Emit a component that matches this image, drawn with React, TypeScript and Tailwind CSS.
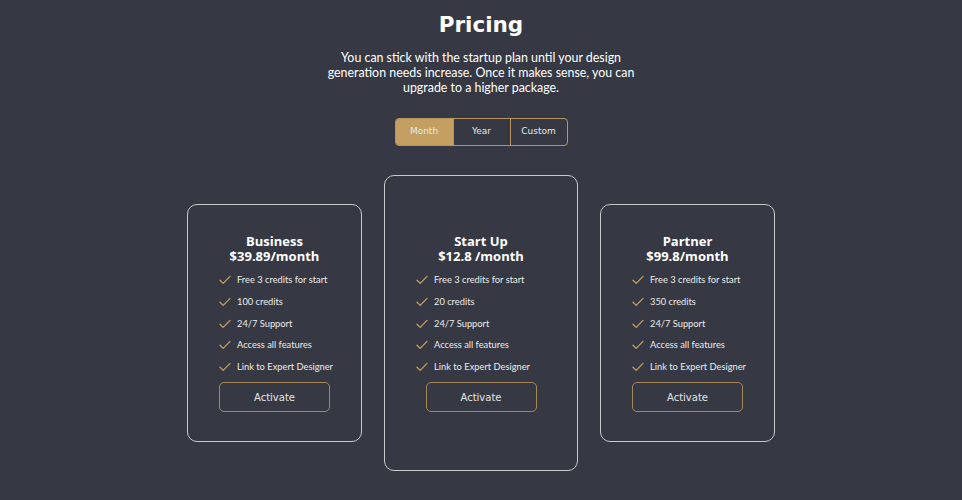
import { useState } from "react";

const plans = [
  { name: "Business", price: "$39.89/month", credits: "100 credits", featured: false },
  { name: "Start Up", price: "$12.8 /month", credits: "20 credits", featured: true },
  { name: "Partner", price: "$99.8/month", credits: "350 credits", featured: false },
];

const heading = { fontFamily: '"DejaVu Sans", "Open Sans", sans-serif' };
const cardHeading = { fontFamily: '"Open Sans", "DejaVu Sans", sans-serif' };
const body = { fontFamily: 'Lato, "Open Sans", sans-serif' };

function Check() {
  return (
    <svg width="12" height="10" viewBox="0 0 12 10" fill="none" className="shrink-0">
      <path d="M1 5.2 L4.2 8.4 L11 1.4" stroke="#c49f62" strokeWidth="1.3" strokeLinecap="round" strokeLinejoin="round" />
    </svg>
  );
}

export default function App() {
  const [period, setPeriod] = useState("Month");

  return (
    <div className="w-full h-[500px] bg-[#363943] flex flex-col items-center overflow-hidden text-white">
      <h1 className="mt-[9px] text-[21.5px] leading-[32px] font-bold" style={heading}>
        Pricing
      </h1>
      <p className="mt-[9px] w-[314px] text-center text-[12.4px] leading-[15px]" style={body}>
        You can stick with the startup plan until your design generation needs increase. Once it makes sense, you can upgrade to a higher package.
      </p>

      {/* toggle */}
      <div className="mt-[23px] flex h-[28px] rounded-[4px] border border-[#b8965e] overflow-hidden">
        {["Month", "Year", "Custom"].map((p, i) => (
          <button
            key={p}
            onClick={() => setPeriod(p)}
            className={`w-[57px] text-[9px] text-[#e8e8e8] ${i > 0 ? "border-l border-[#b8965e]" : ""} ${
              period === p ? "bg-[#c49f62]" : "bg-transparent"
            }`}
            style={heading}
            type="button"
          >
            {p}
          </button>
        ))}
      </div>

      {/* cards */}
      <div className="mt-[29px] flex items-center gap-[22px]">
        {plans.map((plan) => (
          <div
            key={plan.name}
            className={`flex flex-col items-center justify-center rounded-[10px] border border-[#c9c9cc] ${
              plan.featured ? "w-[194px] h-[296px]" : "w-[175px] h-[238px]"
            }`}
          >
            <div className="text-center text-[13px] leading-[15px] font-bold" style={cardHeading}>
              <div>{plan.name}</div>
              <div>{plan.price}</div>
            </div>
            <ul className="mt-[8px] flex flex-col gap-[4.7px] self-start pl-[31px]" style={body}>
              {["Free 3 credits for start", plan.credits, "24/7 Support", "Access all features", "Link to Expert Designer"].map((f) => (
                <li key={f} className="flex items-center gap-[6px] h-[17px] text-[9.3px] text-[#ececec]">
                  <Check />
                  <span>{f}</span>
                </li>
              ))}
            </ul>
            <button
              type="button"
              className="mt-[7px] w-[111px] h-[30px] rounded-[5px] border border-[#a68758] text-[10px] text-[#e4e4e4]"
              style={heading}
            >
              Activate
            </button>
          </div>
        ))}
      </div>
    </div>
  );
}
